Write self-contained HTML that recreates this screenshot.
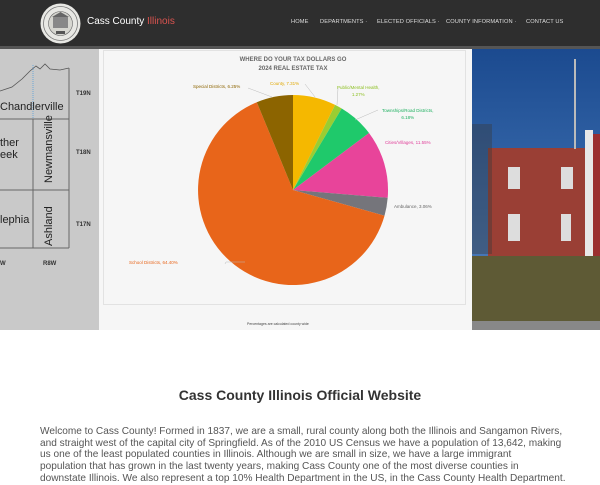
<!DOCTYPE html>
<html><head><style>
*{margin:0;padding:0;box-sizing:border-box}
body{width:600px;height:480px;overflow:hidden;background:#fff;font-family:"Liberation Sans",sans-serif;position:relative}
.hdr{position:absolute;left:0;top:0;width:600px;height:46px;background:#2e2e2e}
.nav{position:absolute;top:19px;font-size:5.7px;color:#ddd;letter-spacing:.1px}
.abs{position:absolute}
</style></head><body>
<div class="hdr">
 <svg class="abs" style="left:40px;top:3px" width="41" height="41" viewBox="0 0 41 41">
  <circle cx="20.5" cy="20.5" r="20" fill="#e8e8e4"/>
  <circle cx="20.5" cy="20.5" r="17" fill="none" stroke="#777" stroke-width=".8"/>
  <circle cx="20.5" cy="20.5" r="12" fill="#d6d6d0" stroke="#666" stroke-width=".6"/>
  <rect x="13" y="14" width="15" height="11" fill="#888"/>
  <polygon points="12,14 20.5,9 29,14" fill="#666"/>
  <rect x="16" y="28" width="9" height="3" fill="#555"/>
 </svg>
 <div class="abs" style="left:87px;top:16px;font-size:10px;color:#fff">Cass County <span style="color:#d9534f">Illinois</span></div>
 <div class="nav" style="left:291px">HOME</div>
 <div class="nav" style="left:320px">DEPARTMENTS ·</div>
 <div class="nav" style="left:377px">ELECTED OFFICIALS ·</div>
 <div class="nav" style="left:446px">COUNTY INFORMATION ·</div>
 <div class="nav" style="left:526px">CONTACT US</div>
</div>
<div class="abs" style="left:0;top:46px;width:600px;height:4px;background:#555"></div>
<div class="abs" style="left:0;top:49px;width:99px;height:281px;background:#c9c9c9;overflow:hidden">
 <svg width="99" height="281" style="position:absolute;left:0;top:0">
  <polyline points="0,42 12,38 22,30 30,22 36,17 40,20 45,15 50,20 60,21 69,19" fill="none" stroke="#555" stroke-width=".8"/>
  <line x1="33" y1="16" x2="33" y2="70" stroke="#6aa6d8" stroke-dasharray="1,1"/>
  <line x1="69" y1="19" x2="69" y2="199" stroke="#666"/>
  <line x1="0" y1="70" x2="69" y2="70" stroke="#666"/>
  <line x1="0" y1="141" x2="69" y2="141" stroke="#666"/>
  <line x1="0" y1="199" x2="69" y2="199" stroke="#666"/>
  <line x1="33" y1="70" x2="33" y2="199" stroke="#666"/>
 </svg>
 <div class="abs" style="left:0;top:52px;font-size:11px;color:#222">Chandlerville</div>
 <div class="abs" style="left:0;top:88px;font-size:11px;color:#222;line-height:12px">ther<br>eek</div>
 <div class="abs" style="left:0;top:165px;font-size:11px;color:#222">lephia</div>
 <div class="abs" style="left:43px;top:134px;font-size:11px;color:#222;transform:rotate(-90deg);transform-origin:0 0">Newmansville</div>
 <div class="abs" style="left:43px;top:197px;font-size:11px;color:#222;transform:rotate(-90deg);transform-origin:0 0">Ashland</div>
 <div class="abs" style="left:76px;top:42px;font-size:6px;font-weight:bold;color:#333">T19N</div>
 <div class="abs" style="left:76px;top:101px;font-size:6px;font-weight:bold;color:#333">T18N</div>
 <div class="abs" style="left:76px;top:173px;font-size:6px;font-weight:bold;color:#333">T17N</div>
 <div class="abs" style="left:0;top:212px;font-size:6px;font-weight:bold;color:#333">W</div>
 <div class="abs" style="left:43px;top:212px;font-size:6px;font-weight:bold;color:#333">R8W</div>
</div>
<div class="abs" style="left:99px;top:49px;width:373px;height:281px;background:#f6f6f6"></div>
<div class="abs" style="left:103px;top:50px;width:363px;height:255px;border:1px solid #e2e2e2"></div>
<svg class="abs" style="left:0;top:0" width="600" height="330">
 <g stroke="none">
  <path d="M293,190 L293,95 A95,95 0 0 1 335.1,104.9 Z" fill="#f5b800"/>
  <path d="M293,190 L335.1,104.9 A95,95 0 0 1 341.7,108.5 Z" fill="#9acd32"/>
  <path d="M293,190 L341.7,108.5 A95,95 0 0 1 369,133 Z" fill="#1fc96b"/>
  <path d="M293,190 L369,133 A95,95 0 0 1 387.7,197.8 Z" fill="#e8449a"/>
  <path d="M293,190 L387.7,197.8 A95,95 0 0 1 384.5,215.7 Z" fill="#75757b"/>
  <path d="M293,190 L384.5,215.7 A95,95 0 1 1 256.8,102.2 Z" fill="#e8651a"/>
  <path d="M293,190 L256.8,102.2 A95,95 0 0 1 293,95 Z" fill="#8c6400"/>
 </g>
 <g stroke="#bbb" stroke-width=".5" fill="none">
  <polyline points="248,88 272,97"/><polyline points="305,84 315,97"/><polyline points="338,88 337,105"/><polyline points="378,110 355,120"/><polyline points="225,264 226,262 245,262"/>
 </g>
</svg>
<div class="abs" style="left:228px;top:56px;font-size:6px;color:#666;font-weight:bold;text-align:center;width:130px;line-height:9px">WHERE DO YOUR TAX DOLLARS GO<br>2024 REAL ESTATE TAX</div>
<div class="abs" style="left:193px;top:84px;font-size:4.5px;color:#8c6400">Special Districts, 6.25%</div>
<div class="abs" style="left:270px;top:81px;font-size:4.5px;color:#e0a800">County, 7.31%</div>
<div class="abs" style="left:337px;top:84px;font-size:4.5px;color:#8cbf20;line-height:7px;text-align:center">Public/Mental Health,<br>1.27%</div>
<div class="abs" style="left:382px;top:107px;font-size:4.5px;color:#1fb060;line-height:7px;text-align:center">Townships/Road Districts,<br>6.18%</div>
<div class="abs" style="left:385px;top:140px;font-size:4.5px;color:#e0409a">Cities/Villages, 11.55%</div>
<div class="abs" style="left:394px;top:204px;font-size:4.5px;color:#666">Ambulance, 3.06%</div>
<div class="abs" style="left:129px;top:260px;font-size:4.5px;color:#e8651a">School Districts, 64.40%</div>
<div class="abs" style="left:247px;top:322px;font-size:3.5px;color:#444">Percentages are calculated county wide</div>
<div class="abs" style="left:472px;top:49px;width:128px;height:281px;background:linear-gradient(#1b4a8f,#3c6eb0 60%,#5b85c0);overflow:hidden">
 <div class="abs" style="left:16px;top:99px;width:100px;height:108px;background:#9a3f35"></div>
 <div class="abs" style="left:113px;top:81px;width:8px;height:126px;background:#e8e8e8"></div>
 <div class="abs" style="left:121px;top:85px;width:7px;height:122px;background:#9a2f30"></div>
 <div class="abs" style="left:102px;top:10px;width:2px;height:90px;background:#bbb"></div>
 <div class="abs" style="left:36px;top:118px;width:12px;height:22px;background:#ddd"></div>
 <div class="abs" style="left:89px;top:118px;width:12px;height:22px;background:#ddd"></div>
 <div class="abs" style="left:36px;top:165px;width:12px;height:27px;background:#ddd"></div>
 <div class="abs" style="left:89px;top:165px;width:10px;height:27px;background:#ddd"></div>
 <div class="abs" style="left:0;top:75px;width:20px;height:130px;background:#3a3a3a;opacity:.4"></div>
 <div class="abs" style="left:0;top:207px;width:128px;height:68px;background:#5e5a35"></div>
 <div class="abs" style="left:0;top:272px;width:128px;height:9px;background:#888"></div>
</div>
<div class="abs" style="left:0;top:387px;width:600px;text-align:center;font-size:14px;font-weight:bold;color:#333">Cass County Illinois Official Website</div>
<div class="abs" style="left:40px;top:426px;font-size:10.1px;line-height:11.7px;color:#555;white-space:nowrap">Welcome to Cass County! Formed in 1837, we are a small, rural county along both the Illinois and Sangamon Rivers,<br>and straight west of the capital city of Springfield. As of the 2010 US Census we have a population of 13,642, making<br>us one of the least populated counties in Illinois. Although we are small in size, we have a large immigrant<br>population that has grown in the last twenty years, making Cass County one of the most diverse counties in<br>downstate Illinois. We also represent a top 10% Health Department in the US, in the Cass County Health Department.</div>
</body></html>
